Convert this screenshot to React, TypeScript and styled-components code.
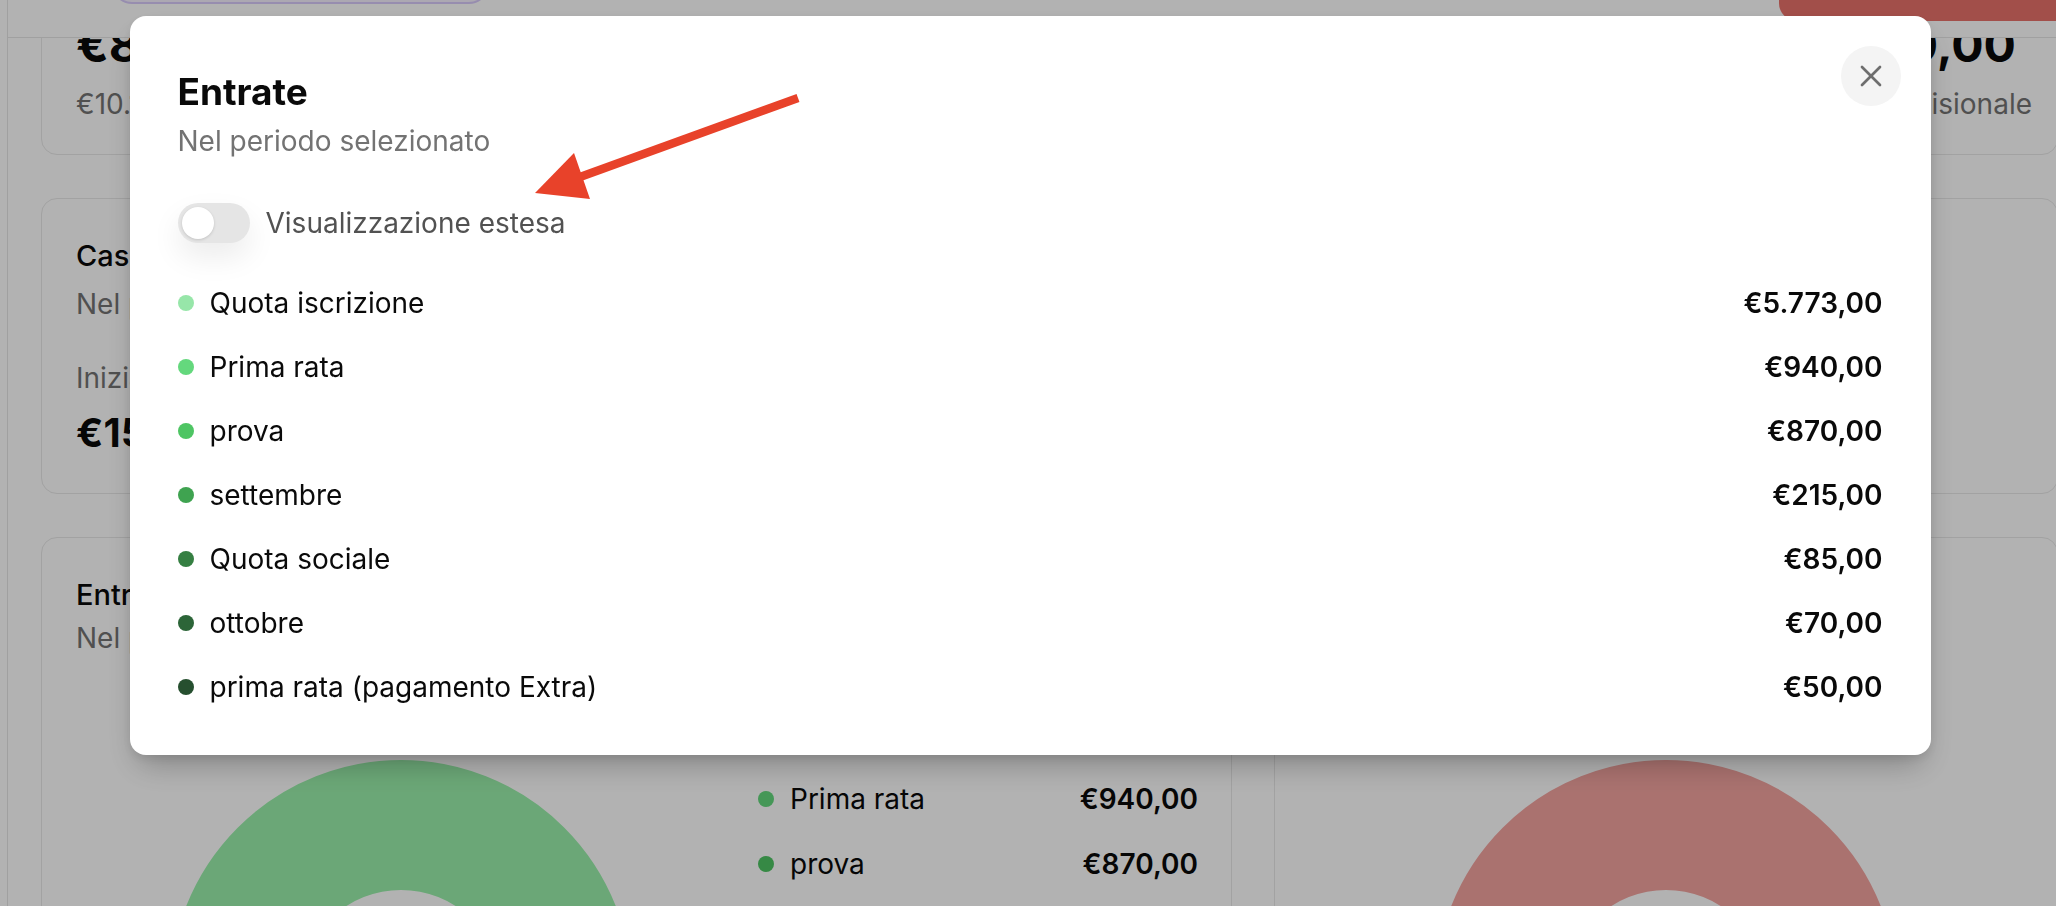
import React from "react";
import styled, { createGlobalStyle } from "styled-components";
import { X } from "lucide-react";

const GlobalStyle = createGlobalStyle`
  html, body {
    margin: 0;
    padding: 0;
  }
  body {
    width: 2056px;
    height: 906px;
    overflow: hidden;
    background: #ffffff;
    font-family: Inter, "Noto Sans", sans-serif;
    color: #0a0a0a;
    -webkit-font-smoothing: antialiased;
  }
  * {
    box-sizing: border-box;
  }
`;

interface Entry {
  label: string;
  amount: string;
  color: string;
}

const entries: Entry[] = [
  { label: "Quota iscrizione", amount: "€5.773,00", color: "#97e6a9" },
  { label: "Prima rata", amount: "€940,00", color: "#64d87d" },
  { label: "prova", amount: "€870,00", color: "#4ec563" },
  { label: "settembre", amount: "€215,00", color: "#3fa350" },
  { label: "Quota sociale", amount: "€85,00", color: "#357f42" },
  { label: "ottobre", amount: "€70,00", color: "#2c6538" },
  { label: "prima rata (pagamento Extra)", amount: "€50,00", color: "#264f2f" },
];

const Donut = ({ color }: { color: string }) => (
  <svg width="462" height="462" viewBox="0 0 462 462">
    <circle cx="231" cy="231" r="166" fill="none" stroke={color} strokeWidth="130" />
  </svg>
);

const App = () => {
  return (
    <>
      <GlobalStyle />
      <Page>
        <Sidebar />
        <Main>
          <Header>
            <TabPill />
            <ActionButton />
          </Header>
          <Content>
            <Row $cols="1fr 1fr 1fr">
              <SummaryCard>
                <CardTitle>Entrate totali</CardTitle>
                <BigValue>€8.003,00</BigValue>
                <Muted>€10.173,00 previsto</Muted>
              </SummaryCard>
              <SummaryCard>
                <CardTitle>Uscite totali</CardTitle>
                <BigValue>€5.833,00</BigValue>
                <Muted>€7.240,00 previsto</Muted>
              </SummaryCard>
              <SummaryCard $alignEnd>
                <CardTitle>Saldo</CardTitle>
                <BigValue $shift>€2.170,00</BigValue>
                <Muted>Saldo previsionale</Muted>
              </SummaryCard>
            </Row>
            <Row $cols="1fr 1fr 1fr">
              <CashCard>
                <CardTitle>Cassa</CardTitle>
                <Subtitle>Nel periodo selezionato</Subtitle>
                <Muted $top={34}>Iniziale</Muted>
                <CashValue>€15.420,00</CashValue>
              </CashCard>
              <CashCard>
                <CardTitle>Banca</CardTitle>
                <Subtitle>Nel periodo selezionato</Subtitle>
                <Muted $top={34}>Iniziale</Muted>
                <CashValue>€4.310,00</CashValue>
              </CashCard>
              <CashCard>
                <CardTitle>Totale</CardTitle>
                <Subtitle>Nel periodo</Subtitle>
                <Muted $top={34}>Finale</Muted>
                <CashValue>€19,00</CashValue>
              </CashCard>
            </Row>
            <Row $cols="1191px 784px">
              <ChartCard>
                <CardTitle>Entrate</CardTitle>
                <Subtitle $top={3}>Nel periodo selezionato</Subtitle>
                <ChartRow>
                  <DonutBox>
                    <Donut color="#9af0ab" />
                  </DonutBox>
                  <Legend>
                    {entries.slice(0, 3).map((e) => (
                      <LegendItem key={e.label}>
                        <Dot $color={e.color} />
                        <LegendLabel>{e.label}</LegendLabel>
                        <Amount>{e.amount}</Amount>
                      </LegendItem>
                    ))}
                  </Legend>
                </ChartRow>
              </ChartCard>
              <ChartCard>
                <CardTitle>Uscite</CardTitle>
                <Subtitle $top={3}>Nel periodo selezionato</Subtitle>
                <ChartRow $center>
                  <DonutBox $auto>
                    <Donut color="#f4a4a0" />
                  </DonutBox>
                </ChartRow>
              </ChartCard>
            </Row>
          </Content>
        </Main>
      </Page>

      <Overlay>
        <Dialog>
          <CloseButton aria-label="Chiudi">
            <X size={36} strokeWidth={1.8} />
          </CloseButton>
          <Arrow width="700" height="220" viewBox="0 0 700 220">
            <line x1="450" y1="161" x2="668" y2="82" stroke="#e8422a" strokeWidth="8.5" />
            <polygon points="405,177 444,137 460,183" fill="#e8422a" />
          </Arrow>
          <DialogTitle>Entrate</DialogTitle>
          <DialogSubtitle>Nel periodo selezionato</DialogSubtitle>
          <ToggleRow>
            <Switch>
              <Thumb />
            </Switch>
            <ToggleLabel>Visualizzazione estesa</ToggleLabel>
          </ToggleRow>
          <List>
            {entries.map((e) => (
              <ListRow key={e.label}>
                <Dot $color={e.color} />
                <RowLabel>{e.label}</RowLabel>
                <Amount>{e.amount}</Amount>
              </ListRow>
            ))}
          </List>
        </Dialog>
      </Overlay>
    </>
  );
};

export default App;

const Page = styled.div`
  display: flex;
  width: 2056px;
  height: 906px;
  overflow: hidden;
`;

const Sidebar = styled.aside`
  flex: 0 0 8px;
  background: #ffffff;
  border-right: 1px solid #e6e6e6;
`;

const Main = styled.main`
  flex: 1;
  min-width: 0;
  display: flex;
  flex-direction: column;
  overflow: hidden;
`;

const Header = styled.header`
  position: relative;
  z-index: 2;
  flex: 0 0 38px;
  display: flex;
  align-items: flex-start;
  padding-left: 104px;
  background: #ffffff;
  border-bottom: 1px solid #e6e6e6;
  overflow: hidden;
`;

const TabPill = styled.div`
  width: 377px;
  height: 40px;
  margin-top: -36px;
  border-radius: 20px;
  background: #f6f1ff;
  border: 2px solid #d9cbfb;
`;

const ActionButton = styled.div`
  flex: 0 0 300px;
  height: 50px;
  margin-top: -29px;
  margin-left: auto;
  margin-right: -23px;
  border-radius: 18px;
  background: #e9716a;
`;

const Content = styled.div`
  width: 2050px;
  margin-top: -112px;
  padding-left: 33px;
  flex-shrink: 0;
`;

const Row = styled.div<{ $cols: string }>`
  display: grid;
  grid-template-columns: ${(p) => p.$cols};
  gap: 42px;
  width: 2017px;
  margin-bottom: 43px;
`;

const Card = styled.section`
  display: flex;
  flex-direction: column;
  border: 1px solid #e8e8e8;
  border-radius: 16px;
  background: #ffffff;
`;

const SummaryCard = styled(Card)<{ $alignEnd?: boolean }>`
  height: 229px;
  padding: 37px ${(p) => (p.$alignEnd ? "25px" : "34px")} 32px 34px;
  align-items: ${(p) => (p.$alignEnd ? "flex-end" : "flex-start")};
`;

const CashCard = styled(Card)`
  height: 296px;
  padding: 37px 34px;
`;

const ChartCard = styled(Card)`
  height: 760px;
  padding: 37px 34px;
`;

const CardTitle = styled.h3`
  margin: 0;
  font-size: 29px;
  line-height: 40px;
  font-weight: 500;
  color: #0a0a0a;
`;

const BigValue = styled.div<{ $shift?: boolean }>`
  margin: 13px ${(p) => (p.$shift ? "16px" : "0")} 0 0;
  font-size: 48px;
  line-height: 56px;
  font-weight: 700;
  color: #0a0a0a;
  white-space: nowrap;
`;

const Muted = styled.div<{ $top?: number }>`
  margin-top: ${(p) => p.$top ?? 11}px;
  font-size: 28px;
  line-height: 40px;
  color: #737373;
  white-space: nowrap;
`;

const Subtitle = styled.div<{ $top?: number }>`
  margin-top: ${(p) => p.$top ?? 8}px;
  font-size: 28px;
  line-height: 40px;
  color: #737373;
`;

const CashValue = styled.div`
  margin-top: 11px;
  font-size: 40px;
  line-height: 48px;
  font-weight: 700;
  color: #0a0a0a;
`;

const ChartRow = styled.div<{ $center?: boolean }>`
  display: flex;
  align-items: flex-start;
  justify-content: ${(p) => (p.$center ? "center" : "flex-start")};
  gap: 32px;
  margin-top: 56px;
`;

const DonutBox = styled.div<{ $auto?: boolean }>`
  flex: 0 0 ${(p) => (p.$auto ? "auto" : "650px")};
  display: flex;
  justify-content: center;
  padding-top: 46px;
`;

const Legend = styled.ul`
  flex: 0 0 440px;
  display: flex;
  flex-direction: column;
  gap: 25px;
  margin: 0;
  padding: 0;
  list-style: none;
`;

const LegendItem = styled.li`
  display: flex;
  align-items: center;
  height: 40px;
`;

const Dot = styled.span<{ $color: string }>`
  flex: 0 0 16px;
  width: 16px;
  height: 16px;
  margin-right: 16px;
  border-radius: 50%;
  background: ${(p) => p.$color};
`;

const LegendLabel = styled.span`
  flex: 1;
  font-size: 28px;
  line-height: 40px;
  color: #0a0a0a;
`;

const Amount = styled.span`
  font-size: 28px;
  line-height: 40px;
  font-weight: 600;
  color: #0a0a0a;
  white-space: nowrap;
`;

const Overlay = styled.div`
  position: fixed;
  inset: 0;
  z-index: 10;
  display: flex;
  justify-content: center;
  align-items: flex-start;
  padding: 16px 0 0 4px;
  background: rgba(0, 0, 0, 0.3);
`;

const Dialog = styled.div`
  position: relative;
  width: 1801px;
  padding: 54px 48px 48px;
  border-radius: 16px;
  background: #ffffff;
  box-shadow: 0 16px 32px -8px rgba(0, 0, 0, 0.28), 0 4px 10px rgba(0, 0, 0, 0.08);
`;

const CloseButton = styled.button`
  position: absolute;
  top: 30px;
  right: 30px;
  width: 60px;
  height: 60px;
  display: grid;
  place-items: center;
  padding: 0;
  border: none;
  border-radius: 50%;
  background: #f4f4f4;
  color: #6e6e6e;
  cursor: pointer;
`;

const Arrow = styled.svg`
  position: absolute;
  left: 0;
  top: 0;
  pointer-events: none;
`;

const DialogTitle = styled.h2`
  margin: 0;
  font-size: 37px;
  line-height: 43px;
  font-weight: 700;
  color: #0a0a0a;
`;

const DialogSubtitle = styled.p`
  margin: 8px 0 0;
  font-size: 28px;
  line-height: 40px;
  color: #737373;
`;

const ToggleRow = styled.div`
  display: flex;
  align-items: center;
  gap: 16px;
  height: 40px;
  margin-top: 42px;
`;

const Switch = styled.div`
  width: 72px;
  height: 40px;
  padding: 4px;
  border-radius: 20px;
  background: #e5e5e5;
  box-shadow: 0 14px 30px rgba(0, 0, 0, 0.08);
`;

const Thumb = styled.div`
  width: 32px;
  height: 32px;
  border-radius: 50%;
  background: #ffffff;
  box-shadow: 0 1px 3px rgba(0, 0, 0, 0.15);
`;

const ToggleLabel = styled.span`
  font-size: 28px;
  line-height: 40px;
  color: #525252;
`;

const List = styled.ul`
  display: flex;
  flex-direction: column;
  gap: 24px;
  margin: 40px 0 0;
  padding: 0;
  list-style: none;
`;

const ListRow = styled.li`
  display: flex;
  align-items: center;
  height: 40px;
`;

const RowLabel = styled.span`
  flex: 1;
  font-size: 28px;
  line-height: 40px;
  color: #0a0a0a;
`;
